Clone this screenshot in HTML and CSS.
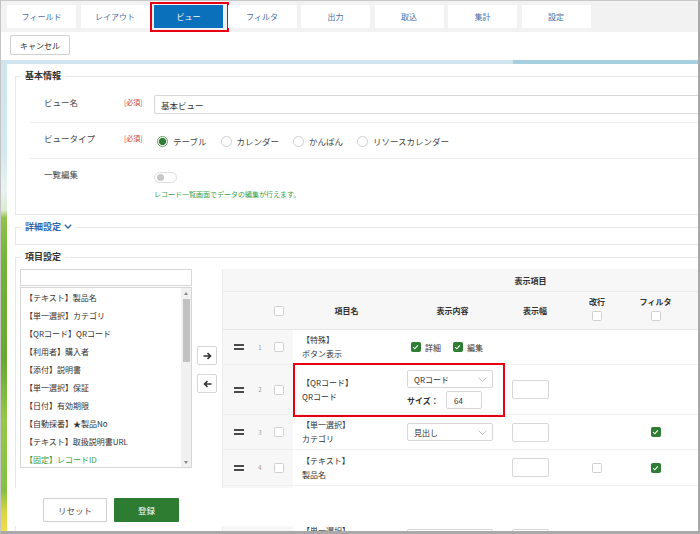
FILE: index.html
```html
<!DOCTYPE html>
<html lang="ja">
<head>
<meta charset="utf-8">
<title>ビュー設定</title>
<link rel="stylesheet" href="styles.css">
</head>
<body>
<div class="app">
  <nav class="tabs">
    <div class="tab">フィールド</div>
    <div class="tab">レイアウト</div>
    <div class="tab active">ビュー<span class="mark-tab"></span></div>
    <div class="tab">フィルタ</div>
    <div class="tab">出力</div>
    <div class="tab">取込</div>
    <div class="tab">集計</div>
    <div class="tab">設定</div>
  </nav>
  <div class="toolbar"><div class="btn-cancel">キャンセル</div></div>
  <div class="stage">
    <div class="panel">
      <fieldset class="fs">
        <legend>基本情報</legend>
        <div class="fs-body basic">
          <div class="frow r1">
            <div class="flabel">ビュー名</div>
            <div class="freq">[必須]</div>
            <div class="ffield f1"><div class="text-input wide">基本ビュー</div></div>
          </div>
          <div class="frow r2">
            <div class="flabel">ビュータイプ</div>
            <div class="freq">[必須]</div>
            <div class="ffield f2">
              <div class="radios">
                <span class="opt"><span class="radio on"></span>テーブル</span>
                <span class="opt"><span class="radio"></span>カレンダー</span>
                <span class="opt"><span class="radio"></span>かんばん</span>
                <span class="opt"><span class="radio"></span>リソースカレンダー</span>
              </div>
            </div>
          </div>
          <div class="frow r3">
            <div class="flabel">一覧編集</div>
            <div class="freq"></div>
            <div class="ffield f3">
              <div class="toggle"><span class="knob"></span></div>
              <div class="help">レコード一覧画面でデータの編集が行えます。</div>
            </div>
          </div>
        </div>
      </fieldset>

      <fieldset class="fs fs-detail">
        <legend class="link">詳細設定 <svg class="chev" width="8" height="5" viewBox="0 0 8 5"><polyline points="0.8,0.8 4,4 7.2,0.8" fill="none" stroke="#2f68b0" stroke-width="1.4"/></svg></legend>
        <div class="fs-body detail"></div>
      </fieldset>

      <fieldset class="fs fs-items">
        <legend>項目設定</legend>
        <div class="fs-body items">
          <div class="picker">
            <div class="pick-col">
              <div class="search"></div>
              <div class="list">
                <div class="list-items">
                  <div class="li">【テキスト】製品名</div>
                  <div class="li">【単一選択】カテゴリ</div>
                  <div class="li">【QRコード】QRコード</div>
                  <div class="li">【利用者】購入者</div>
                  <div class="li">【添付】説明書</div>
                  <div class="li">【単一選択】保証</div>
                  <div class="li">【日付】有効期限</div>
                  <div class="li">【自動採番】★製品No</div>
                  <div class="li">【テキスト】取扱説明書URL</div>
                  <div class="li fixed">【固定】レコードID</div>
                </div>
                <div class="sbar">
                  <div class="sb-btn"><span class="tri-up"></span></div>
                  <div class="sb-thumb"></div>
                  <div class="sb-fill"></div>
                  <div class="sb-btn"><span class="tri-down"></span></div>
                </div>
              </div>
            </div>
            <div class="arrows">
              <div class="abtn"><svg width="9" height="8" viewBox="0 0 9 8"><path d="M0.5 4H7.5M4.5 1L7.5 4L4.5 7" fill="none" stroke="#333" stroke-width="1.6"/></svg></div>
              <div class="abtn"><svg width="9" height="8" viewBox="0 0 9 8"><path d="M8.5 4H1.5M4.5 1L1.5 4L4.5 7" fill="none" stroke="#333" stroke-width="1.6"/></svg></div>
            </div>
          </div>

          <div class="table">
            <div class="th1">表示項目</div>
            <div class="trow th2">
              <div class="c-left"><span class="hd-sp"></span><span class="num"></span><span class="cb"></span></div>
              <div class="c-hd">項目名</div>
              <div class="c-hd">表示内容</div>
              <div class="c-hd">表示幅</div>
              <div class="c-hd stack">改行<span class="cb"></span></div>
              <div class="c-hd stack">フィルタ<span class="cb"></span></div>
              <div class="c-hd"></div>
            </div>

            <div class="trow row h35">
              <div class="c-left"><span class="handle"></span><span class="num">1</span><span class="cb"></span></div>
              <div class="c-name"><span>【特殊】</span><span>ボタン表示</span></div>
              <div class="c-content inline">
                <span class="cb on"><svg width="10" height="10" viewBox="0 0 10 10"><polyline points="2.4,5.2 4.2,7 7.6,3.1" fill="none" stroke="#fff" stroke-width="1.2"/></svg></span><span class="cb-label">詳細</span>
                <span class="cb on gap"><svg width="10" height="10" viewBox="0 0 10 10"><polyline points="2.4,5.2 4.2,7 7.6,3.1" fill="none" stroke="#fff" stroke-width="1.2"/></svg></span><span class="cb-label">編集</span>
              </div>
              <div class="c-width"></div>
              <div class="c-center"></div>
              <div class="c-center"></div>
              <div></div>
            </div>

            <div class="trow row h50 marked">
              <div class="c-left"><span class="handle"></span><span class="num">2</span><span class="cb"></span></div>
              <div class="c-name"><span>【QRコード】</span><span>QRコード</span></div>
              <div class="c-content stacked">
                <div class="select"><span>QRコード</span><svg width="9" height="5" viewBox="0 0 9 5"><polyline points="0.5,0.5 4.5,4.5 8.5,0.5" fill="none" stroke="#bbb" stroke-width="0.9"/></svg></div>
                <div class="size-row"><span class="size-label">サイズ：</span><div class="text-input small">64</div></div>
              </div>
              <div class="c-width"><div class="text-input w"></div></div>
              <div class="c-center"></div>
              <div class="c-center"></div>
              <div></div>
              <span class="mark-row"></span>
            </div>

            <div class="trow row h35">
              <div class="c-left"><span class="handle"></span><span class="num">3</span><span class="cb"></span></div>
              <div class="c-name"><span>【単一選択】</span><span>カテゴリ</span></div>
              <div class="c-content">
                <div class="select"><span>見出し</span><svg width="9" height="5" viewBox="0 0 9 5"><polyline points="0.5,0.5 4.5,4.5 8.5,0.5" fill="none" stroke="#bbb" stroke-width="0.9"/></svg></div>
              </div>
              <div class="c-width"><div class="text-input w"></div></div>
              <div class="c-center"></div>
              <div class="c-center"><span class="cb on"><svg width="10" height="10" viewBox="0 0 10 10"><polyline points="2.4,5.2 4.2,7 7.6,3.1" fill="none" stroke="#fff" stroke-width="1.2"/></svg></span></div>
              <div></div>
            </div>

            <div class="trow row h36">
              <div class="c-left"><span class="handle"></span><span class="num">4</span><span class="cb"></span></div>
              <div class="c-name"><span>【テキスト】</span><span>製品名</span></div>
              <div class="c-content"></div>
              <div class="c-width"><div class="text-input w"></div></div>
              <div class="c-center"><span class="cb"></span></div>
              <div class="c-center"><span class="cb on"><svg width="10" height="10" viewBox="0 0 10 10"><polyline points="2.4,5.2 4.2,7 7.6,3.1" fill="none" stroke="#fff" stroke-width="1.2"/></svg></span></div>
              <div></div>
            </div>

            <div class="trow row h35">
              <div class="c-left"><span class="handle"></span><span class="num">5</span><span class="cb"></span></div>
              <div class="c-name"><span>【利用者】</span><span>購入者</span></div>
              <div class="c-content"></div>
              <div class="c-width"><div class="text-input w"></div></div>
              <div class="c-center"></div>
              <div class="c-center"></div>
              <div></div>
            </div>

            <div class="trow row h35">
              <div class="c-left"><span class="handle"></span><span class="num">6</span><span class="cb"></span></div>
              <div class="c-name"><span>【単一選択】</span><span>保証</span></div>
              <div class="c-content">
                <div class="select"><span>見出し</span><svg width="9" height="5" viewBox="0 0 9 5"><polyline points="0.5,0.5 4.5,4.5 8.5,0.5" fill="none" stroke="#bbb" stroke-width="0.9"/></svg></div>
              </div>
              <div class="c-width"><div class="text-input w"></div></div>
              <div class="c-center"></div>
              <div class="c-center"></div>
              <div></div>
            </div>
          </div>
        </div>
      </fieldset>
    </div>
  </div>

  <div class="footer">
    <div class="btn-reset">リセット</div>
    <div class="btn-save">登録</div>
  </div>
</div>
</body>
</html>
```

FILE: styles.css
```css
* { box-sizing: border-box; }
html, body { margin: 0; padding: 0; }
body {
  font-family: "Noto Sans CJK JP", "Noto Sans", sans-serif;
  font-size: 8px;
  color: #333;
  background: #fff;
}

.app {
  width: 700px;
  height: 534px;
  overflow: hidden;
  position: relative;
  display: flex;
  flex-direction: column;
  border-top: 1px solid #c8c8c8;
  border-left: 1px solid #c4c4c4;
  border-right: 2px solid #a9a9a9;
  border-bottom: 3px solid #a9a9a9;
}

/* tabs */
.tabs {
  flex: none;
  height: 31px;
  background: #f2f2f2;
  display: flex;
  gap: 4.5px;
  padding: 4px 0 0 6px;
}
.tab {
  position: relative;
  width: 69px;
  height: 23px;
  background: #fff;
  color: #4b6ea6;
  font-size: 8px;
  display: flex;
  align-items: center;
  justify-content: center;
}
.tab.active { background: #0b70bb; color: #fff; }
.mark-tab {
  position: absolute;
  left: -4px; right: -6px; top: -3px; bottom: -4px;
  border: 2px solid #e60012;
}

/* toolbar */
.toolbar {
  flex: none;
  height: 28px;
  background: #fff;
  padding: 3px 0 0 9px;
}
.btn-cancel {
  width: 60px;
  height: 20px;
  border: 1px solid #d0d0d0;
  border-radius: 2px;
  background: #fff;
  display: flex;
  align-items: center;
  justify-content: center;
  font-size: 8px;
  color: #333;
}

/* stage with background picture */
.stage {
  flex: 1;
  min-height: 0;
  overflow: hidden;
  padding: 4px 0 0 6px;
  background:
    linear-gradient(to right, #cfe4ec 0, #cfe4ec 512px, #a7cfe0 512px) top left / 100% 4px no-repeat,
    linear-gradient(to bottom, #cfe5ee 0, #d3e8ef 90px, #e9f2f1 130px, #dcebd0 150px, #8fc24a 158px, #76b33a 200px, #6aa632 300px, #93c84a 360px, #86bf45 430px, #d8d640 452px, #f0dd4a 470px);
}
.panel {
  width: 900px;
  height: 100%;
  overflow: hidden;
  background: #fff;
  padding: 5px 0 0 8px;
}

/* fieldsets */
.fs {
  margin: 0;
  padding: 0;
  border: 1px solid #e8e8e8;
  min-width: 0;
}
.fs legend {
  margin-left: 5px;
  padding: 0 4px;
  font-size: 9px;
  font-weight: 700;
  line-height: 14px;
  color: #333;
}
.fs legend.link { color: #2f68b0; }
.chev { vertical-align: 1px; margin-left: 1px; }
.fs-detail, .fs-items { margin-top: 5px; }

.fs-body.basic { padding: 4px 0 9px 14px; }
.fs-body.detail { height: 10px; }
.fs-body.items { padding: 5px 0 0 4px; display: flex; align-items: flex-start; gap: 5px; }

.frow { display: flex; border-bottom: 1px solid #ececec; }
.frow.r1, .frow.r2 { height: 36px; }
.frow.r3 { height: 46px; border-bottom: 0; }
.flabel {
  width: 94px;
  padding: 8px 0 0 14px;
  line-height: 14px;
  font-size: 8.5px;
  color: #444;
}
.freq {
  width: 30px;
  padding-top: 8px;
  line-height: 14px;
  font-size: 7px;
  color: #c94040;
}
.ffield { flex: 1; }
.ffield.f1 { padding-top: 8px; }
.ffield.f2 { padding-top: 11px; }
.ffield.f3 { padding-top: 13px; }

.text-input {
  border: 1px solid #d6d6d6;
  border-radius: 2px;
  background: #fff;
  display: flex;
  align-items: center;
  font-size: 8.5px;
  color: #333;
}
.text-input.wide { width: 600px; height: 19px; padding-left: 6px; }
.text-input.small { width: 36px; height: 18px; padding-left: 7px; font-size: 8px; }
.text-input.w { width: 37px; height: 19px; }

.radios { display: flex; align-items: center; padding-left: 3px; height: 14px; }
.opt { display: flex; align-items: center; margin-right: 14px; font-size: 8.5px; color: #444; }
.radio {
  width: 11px; height: 11px;
  border: 1px solid #cfcfcf;
  border-radius: 50%;
  background: #fff;
  margin-right: 5px;
}
.radio.on {
  border-color: #5f9f61;
  background: radial-gradient(circle, #2e7d32 0, #2e7d32 3.3px, #fff 3.9px);
}

.toggle {
  width: 23px; height: 11px;
  border: 1px solid #dcdcdc;
  border-radius: 6px;
  background: #fff;
  padding: 1px 0 0 1.5px;
}
.knob { display: block; width: 7px; height: 7px; border-radius: 50%; background: #c8c8c8; }
.help { margin-top: 5px; font-size: 7px; line-height: 12px; color: #3aa14a; }

/* item picker */
.picker { display: flex; align-items: center; gap: 5px; }
.pick-col { width: 172px; }
.search { height: 17px; border: 1px solid #d6d6d6; background: #fff; }
.list {
  margin-top: 1px;
  height: 181px;
  border: 1px solid #d6d6d6;
  display: flex;
}
.list-items { flex: 1; padding-top: 1px; }
.li { height: 18px; line-height: 18px; padding-left: 4px; font-size: 8px; color: #333; white-space: nowrap; }
.li.fixed { color: #3c9c40; }
.sbar { width: 10px; background: #f1f1f1; display: flex; flex-direction: column; }
.sb-btn { height: 10px; display: flex; align-items: center; justify-content: center; }
.tri-up { width: 0; height: 0; border-left: 2.5px solid transparent; border-right: 2.5px solid transparent; border-bottom: 3px solid #8a8a8a; }
.tri-down { width: 0; height: 0; border-left: 2.5px solid transparent; border-right: 2.5px solid transparent; border-top: 3px solid #8a8a8a; }
.sb-thumb { margin: 1px 1px 0 1.5px; height: 63px; background: #c1c1c1; }
.sb-fill { flex: 1; }

.arrows { display: flex; flex-direction: column; gap: 9px; margin-top: 2px; }
.abtn {
  width: 20px; height: 19px;
  border: 1px solid #d6d6d6;
  border-radius: 2px;
  background: #fff;
  display: flex; align-items: center; justify-content: center;
}

/* table */
.table { width: 616px; border-left: 1px solid #ececec; }
.th1 {
  height: 23px;
  background: #f7f7f7;
  border-bottom: 1px solid #ebebeb;
  display: flex; align-items: center; justify-content: center;
  font-weight: 700; font-size: 8px;
}
.trow {
  display: grid;
  grid-template-columns: 70px 107px 105px 60px 64px 53px 156px;
  position: relative;
}
.th2 { height: 38px; background: #f7f7f7; border-bottom: 1px solid #e6e6e6; }
.c-hd { display: flex; align-items: center; justify-content: center; font-weight: 700; font-size: 8px; }
.c-hd.stack { flex-direction: column; justify-content: flex-start; padding-top: 4px; line-height: 12px; gap: 3px; }

.row { border-bottom: 1px solid #efefef; }
.h35 { height: 35px; }
.h36 { height: 36px; }
.h50 { height: 50px; }

.c-left { background: #f7f7f7; display: flex; align-items: center; }
.handle, .hd-sp { width: 10px; height: 6px; margin-left: 11px; }
.handle { border-top: 2px solid #4a4a4a; border-bottom: 2px solid #4a4a4a; }
.num { width: 10px; margin-left: 11px; text-align: center; font-size: 6px; color: #999; }
.c-left .cb { margin-left: 9px; }

.cb {
  display: inline-flex;
  width: 10px; height: 10px;
  border: 1px solid #cfcfcf;
  border-radius: 1.5px;
  background: #fff;
  flex: none;
}
.cb.on { background: #2e7d32; border-color: #2e7d32; }
.cb.on svg { margin: -1px 0 0 -1px; }

.c-name {
  display: flex; flex-direction: column; justify-content: center;
  padding-left: 9px; line-height: 14px; font-size: 8px; color: #333; white-space: nowrap;
}
.c-content { display: flex; align-items: center; padding-left: 7px; }
.c-content.inline { padding-left: 11px; }
.cb-label { margin-left: 4px; font-size: 8px; color: #333; }
.cb.gap { margin-left: 12px; }
.c-content.stacked { flex-direction: column; align-items: flex-start; padding-top: 5px; gap: 3px; }

.select {
  width: 86px; height: 18px;
  border: 1px solid #d6d6d6;
  border-radius: 2px;
  background: #fff;
  display: flex; align-items: center; justify-content: space-between;
  padding: 0 5px 0 6px;
  font-size: 8px;
}
.size-row { display: flex; align-items: center; }
.size-label { width: 39px; font-weight: 700; font-size: 8px; }

.c-width { display: flex; align-items: center; padding-left: 7px; }
.c-center { display: flex; align-items: center; justify-content: center; }

.mark-row {
  position: absolute;
  left: 70px; top: -2px;
  width: 212px; height: 54px;
  border: 2px solid #e60012;
}

/* footer overlay */
.footer {
  position: absolute;
  top: 487px; left: 6px; right: 0;
  height: 38px;
  background: #fff;
  display: flex;
  gap: 7px;
  padding: 10px 0 0 36px;
}
.btn-reset, .btn-save {
  height: 24px;
  display: flex; align-items: center; justify-content: center;
  font-size: 8.5px;
  border-radius: 1px;
}
.btn-reset { width: 64px; border: 1px solid #cfcfcf; background: #fff; color: #555; }
.btn-save { width: 65px; background: #2e7b32; color: #fff; }
```
